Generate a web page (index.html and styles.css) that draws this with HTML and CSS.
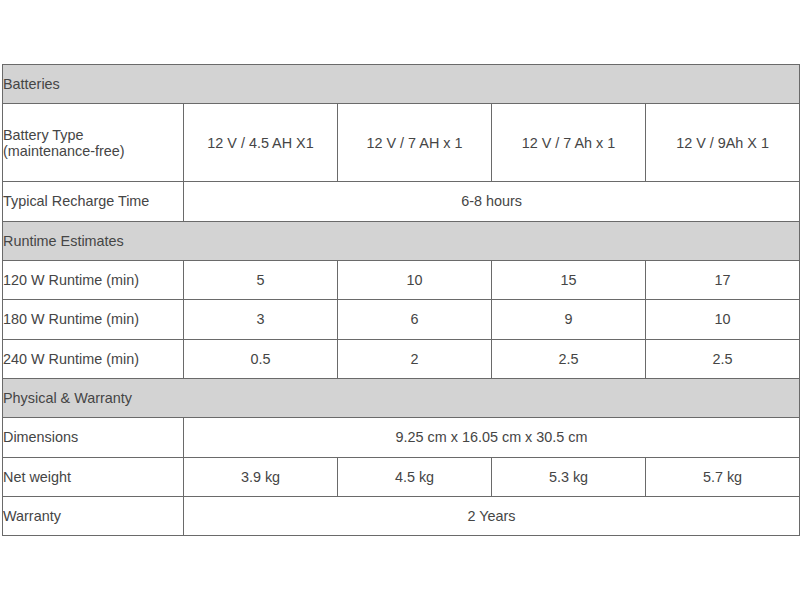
FILE: index.html
```html
<!DOCTYPE html>
<html>
<head>
<meta charset="utf-8">
<link rel="stylesheet" href="styles.css">
</head>
<body>
<div class="wrap">
<table class="spec">
<colgroup>
<col class="c-label"><col class="c-val"><col class="c-val"><col class="c-val"><col class="c-val">
</colgroup>
<tr class="section"><td colspan="5">Batteries</td></tr>
<tr class="tall"><td class="label">Battery Type<br>(maintenance-free)</td><td>12 V / 4.5 AH X1</td><td>12 V / 7 AH x 1</td><td>12 V / 7 Ah x 1</td><td>12 V / 9Ah X 1</td></tr>
<tr><td class="label">Typical Recharge Time</td><td colspan="4">6-8 hours</td></tr>
<tr class="section"><td colspan="5">Runtime Estimates</td></tr>
<tr><td class="label">120 W Runtime (min)</td><td>5</td><td>10</td><td>15</td><td>17</td></tr>
<tr><td class="label">180 W Runtime (min)</td><td>3</td><td>6</td><td>9</td><td>10</td></tr>
<tr><td class="label">240 W Runtime (min)</td><td>0.5</td><td>2</td><td>2.5</td><td>2.5</td></tr>
<tr class="section"><td colspan="5">Physical &amp; Warranty</td></tr>
<tr><td class="label">Dimensions</td><td colspan="4">9.25 cm x 16.05 cm x 30.5 cm</td></tr>
<tr><td class="label">Net weight</td><td>3.9 kg</td><td>4.5 kg</td><td>5.3 kg</td><td>5.7 kg</td></tr>
<tr><td class="label">Warranty</td><td colspan="4">2 Years</td></tr>
</table>
</div>
</body>
</html>
```
FILE: styles.css
```css
html, body {
  margin: 0;
  padding: 0;
  background: #ffffff;
}
.wrap {
  padding: 64px 0 0 2px;
}
.spec {
  border-collapse: collapse;
  width: 797px;
  table-layout: fixed;
  font-family: "Liberation Sans", Arial, sans-serif;
  font-size: 14.4px;
  color: #454545;
}
.c-label { width: 181px; }
.c-val { width: 154px; }
.spec td {
  border: 1px solid #6a6a6a;
  height: 38.33px;
  padding: 0;
  text-align: center;
  vertical-align: middle;
  line-height: 16px;
}
.spec tr.tall td { height: 77px; }
.spec td.label,
.spec tr.section td {
  text-align: left;
  padding-left: 0;
}
.spec tr.section td {
  background: #d3d3d3;
}
```
